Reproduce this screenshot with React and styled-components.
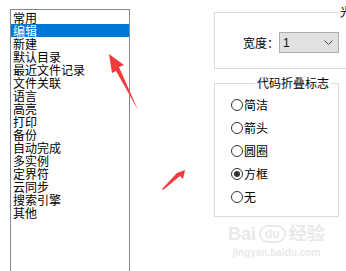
import React from 'react'
import styled, { createGlobalStyle } from 'styled-components'

const GlobalStyle = createGlobalStyle`
  html, body {
    margin: 0;
    padding: 0;
    background: #ffffff;
  }
`

const items = [
  '常用', '编辑', '新建', '默认目录', '最近文件记录', '文件关联', '语言', '高亮',
  '打印', '备份', '自动完成', '多实例', '定界符', '云同步', '搜索引擎', '其他',
]

const radios = [
  { label: '简洁' },
  { label: '箭头' },
  { label: '圆圈' },
  { label: '方框', checked: true },
  { label: '无' },
]

const App = () => {
  return (
    <Page>
      <GlobalStyle />
      <ListBox>
        {items.map((t, i) => (
          <Item key={t} $selected={i === 1}>{t}</Item>
        ))}
      </ListBox>

      <Side>
        <GroupOne>
          <Legend $offset={123}>光</Legend>
          <WidthRow>
            <Label>宽度：</Label>
            <Select>
              <span>1</span>
              <svg width="9" height="5" viewBox="0 0 9 5">
                <path d="M0.5 0.5 L4.5 4.5 L8.5 0.5" fill="none" stroke="#444" strokeWidth="1" />
              </svg>
            </Select>
          </WidthRow>
        </GroupOne>

        <GroupTwo>
          <Legend $offset={24}>代码折叠标志</Legend>
          <RadioList>
            {radios.map((r) => (
              <RadioRow key={r.label}>
                <Circle $checked={r.checked} />
                {r.label}
              </RadioRow>
            ))}
          </RadioList>
        </GroupTwo>
      </Side>

      {/* watermark */}
      <Watermark>
        <MarkTop>
          Bai<Paw>du</Paw>经验
        </MarkTop>
        <MarkUrl>jingyan.baidu.com</MarkUrl>
      </Watermark>

      {/* red annotation arrows */}
      <Arrows width="346" height="271" viewBox="0 0 346 271">
        <polygon points="109,54 124,65 119,67 138,110 116,71 112,73" fill="#f23a3a" />
        <polygon points="185,170 183,179 180,176 163,190 162,189 177,173" fill="#f23a3a" />
      </Arrows>
    </Page>
  )
}

export default App

const Page = styled.div`
  position: relative;
  width: 346px;
  height: 271px;
  overflow: hidden;
  display: flex;
  align-items: flex-start;
  background: #fff;
`
const ListBox = styled.div`
  box-sizing: border-box;
  margin: 9px 0 0 10px;
  width: 120px;
  height: 290px;
  flex-shrink: 0;
  border: 1px solid #828790;
  padding-top: 1px;
`
const Item = styled.div`
  height: 13px;
  line-height: 13px;
  padding-left: 2px;
  font-family: "Noto Sans CJK SC", "Noto Sans", sans-serif;
  font-size: 12px;
  color: ${(p) => (p.$selected ? '#ffffff' : '#000000')};
  background: ${(p) => (p.$selected ? '#0078d7' : 'transparent')};
  white-space: nowrap;
`
const Side = styled.div`
  margin-left: 84px;
  display: flex;
  flex-direction: column;
  flex-shrink: 0;
  font-family: "Noto Sans CJK SC", "Noto Sans", sans-serif;
  font-size: 12px;
  color: #000;
`
const Legend = styled.legend`
  margin-left: ${(p) => p.$offset}px;
  padding: 0 2px;
  height: 16px;
  line-height: 16px;
  font-size: 12px;
`
const GroupOne = styled.fieldset`
  box-sizing: border-box;
  margin: 4px 0 0 0;
  padding: 0 0 15px 0;
  width: 140px;
  border: 1px solid #dcdcdc;
`
const WidthRow = styled.div`
  display: flex;
  align-items: center;
  margin: 12px 0 0 28px;
`
const Label = styled.span`
  width: 36px;
  line-height: 16px;
`
const Select = styled.div`
  box-sizing: border-box;
  width: 60px;
  height: 21px;
  background: #e1e1e1;
  border: 1px solid #adadad;
  display: flex;
  align-items: center;
  justify-content: space-between;
  padding: 0 5px 0 3px;
  font-family: "Liberation Sans", sans-serif;
  font-size: 12px;
  color: #111;
`
const GroupTwo = styled.fieldset`
  box-sizing: border-box;
  margin: 6px 0 0 0;
  padding: 0 0 8px 16px;
  width: 125px;
  border: 1px solid #dcdcdc;
`
const RadioList = styled.div`
  display: flex;
  flex-direction: column;
  padding-top: 2px;
`
const RadioRow = styled.div`
  height: 23px;
  display: flex;
  align-items: center;
  gap: 1px;
  line-height: 16px;
`
const Circle = styled.span`
  box-sizing: border-box;
  width: 12px;
  height: 12px;
  border: 1px solid #333;
  border-radius: 50%;
  background: #fff;
  display: flex;
  align-items: center;
  justify-content: center;
  &::after {
    content: '';
    width: 6px;
    height: 6px;
    border-radius: 50%;
    background: #333;
    display: ${(p) => (p.$checked ? 'block' : 'none')};
  }
`
const Watermark = styled.div`
  position: absolute;
  left: 228px;
  top: 222px;
  display: flex;
  flex-direction: column;
  align-items: center;
  color: #e9e9e9;
  font-family: "Liberation Sans", "Noto Sans CJK SC", sans-serif;
  pointer-events: none;
`
const MarkTop = styled.div`
  display: flex;
  align-items: center;
  font-size: 18px;
  font-weight: bold;
  line-height: 24px;
`
const Paw = styled.span`
  margin: 0 3px;
  padding: 0 4px;
  border: 2px solid #e9e9e9;
  border-radius: 9px;
  font-size: 12px;
  line-height: 14px;
`
const MarkUrl = styled.div`
  font-size: 10px;
  font-weight: bold;
  line-height: 14px;
`
const Arrows = styled.svg`
  position: absolute;
  left: 0;
  top: 0;
  pointer-events: none;
`
